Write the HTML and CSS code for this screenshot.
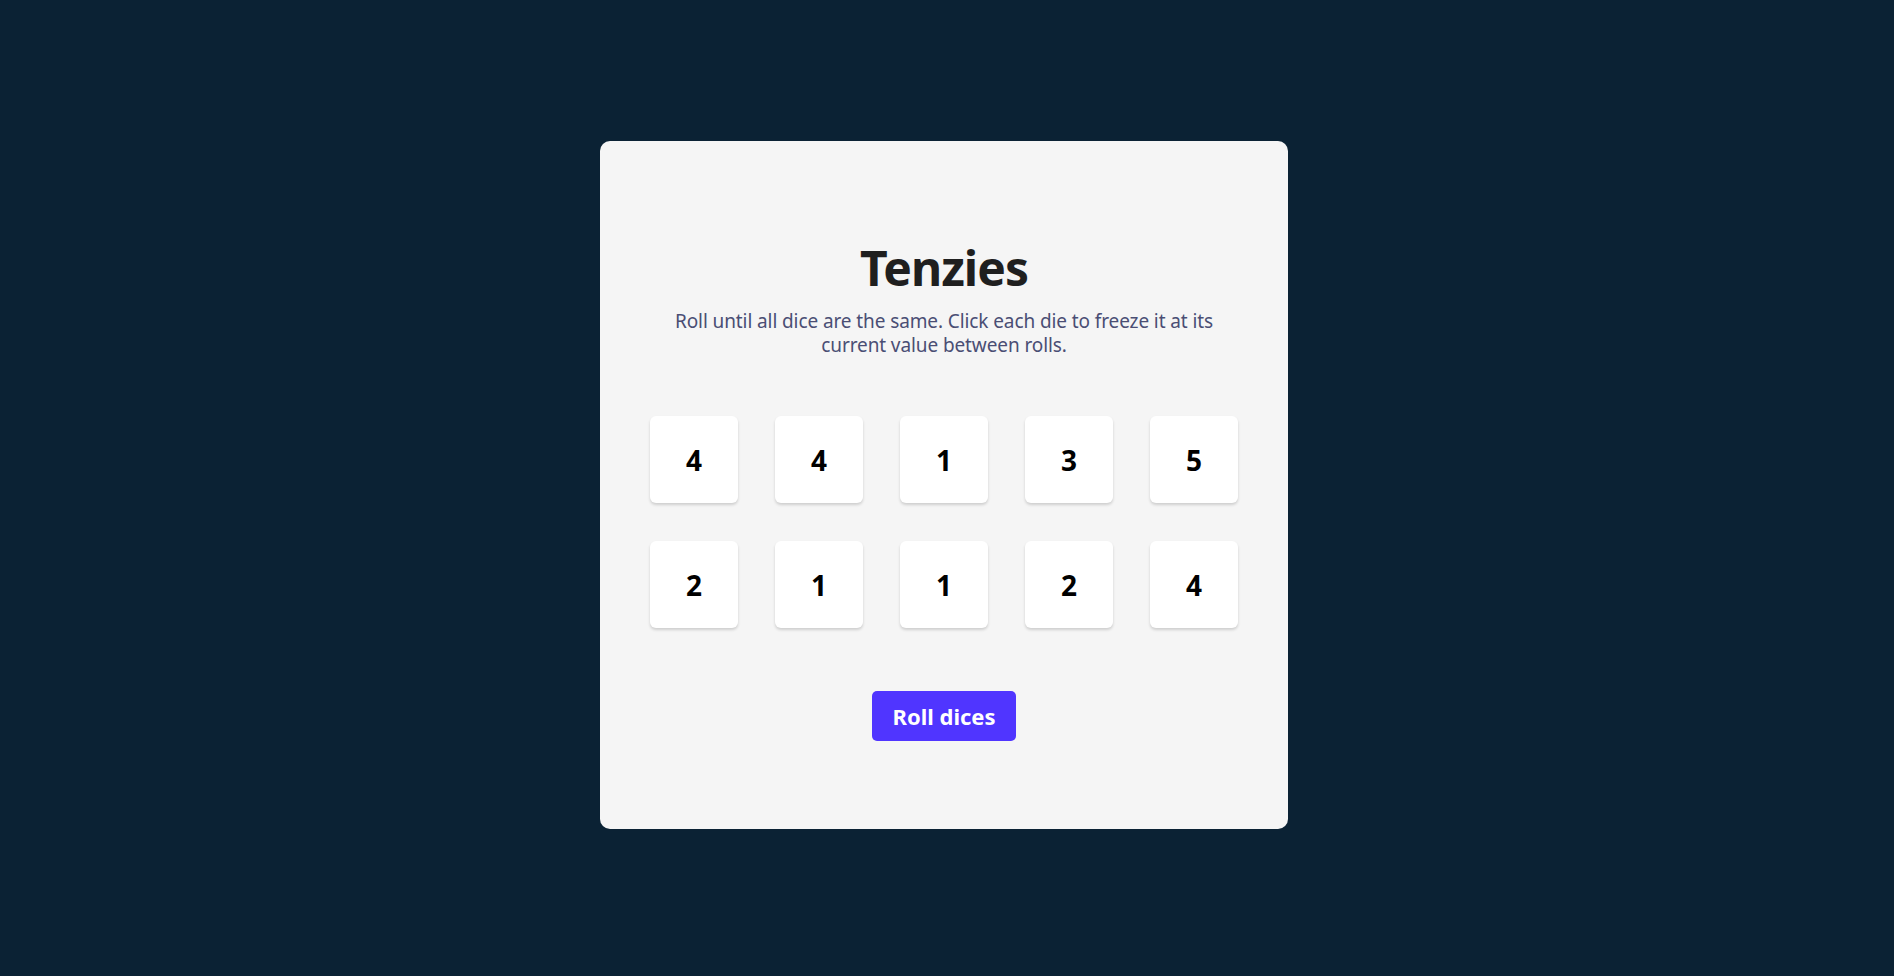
FILE: index.html
```html
<!DOCTYPE html>
<html lang="en">
<head>
<meta charset="utf-8">
<title>Tenzies</title>
<link rel="stylesheet" href="styles.css">
</head>
<body>
<main class="card">
  <h1 class="title">Tenzies</h1>
  <p class="subtitle">Roll until all dice are the same. Click each die to freeze it at its current value between rolls.</p>
  <div class="dice">
    <button class="die">4</button>
    <button class="die">4</button>
    <button class="die">1</button>
    <button class="die">3</button>
    <button class="die">5</button>
    <button class="die">2</button>
    <button class="die">1</button>
    <button class="die">1</button>
    <button class="die">2</button>
    <button class="die">4</button>
  </div>
  <button class="roll">Roll dices</button>
</main>
</body>
</html>
```
FILE: styles.css
```css
html {
  background: #0b2234;
}
html, body {
  margin: 0;
  padding: 0;
}
body {
  padding: 141px 6px 0 0;
  font-family: "Noto Sans", "Open Sans", sans-serif;
}
.card {
  box-sizing: border-box;
  width: 688px;
  height: 688px;
  margin: 0 auto;
  background: #f5f5f5;
  border-radius: 10px;
  padding: 98px 50px 0;
  display: flex;
  flex-direction: column;
  align-items: center;
}
.title {
  margin: 0;
  font-size: 48px;
  line-height: 58px;
  font-weight: 700;
  letter-spacing: -1px;
  color: #1f1f1f;
}
.subtitle {
  margin: 12px 0 0;
  width: 580px;
  text-align: center;
  font-size: 19px;
  letter-spacing: -0.1px;
  line-height: 24px;
  color: #4a4e74;
}
.dice {
  margin-top: 59px;
  display: grid;
  grid-template-columns: repeat(5, 88px);
  grid-auto-rows: 87px;
  column-gap: 37px;
  row-gap: 38px;
}
.die {
  border: none;
  background: #ffffff;
  border-radius: 6px;
  box-shadow: 0 2px 3px rgba(0, 0, 0, 0.16);
  font-family: inherit;
  font-size: 28px;
  font-weight: 700;
  color: #000;
  padding: 0;
  cursor: pointer;
}
.roll {
  margin-top: 63px;
  width: 144px;
  height: 50px;
  border: none;
  border-radius: 5px;
  background: #5035ff;
  color: #fff;
  font-family: inherit;
  font-size: 22px;
  font-weight: 700;
  padding: 0;
  cursor: pointer;
}
```
